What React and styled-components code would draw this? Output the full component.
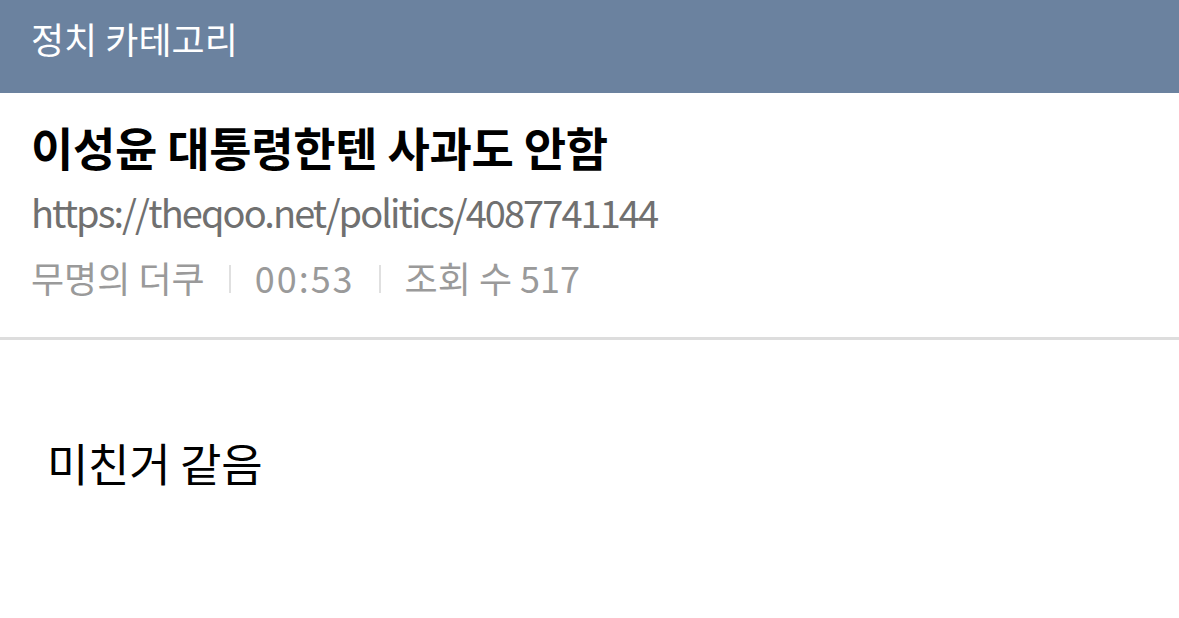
import React from 'react'
import styled, { createGlobalStyle } from 'styled-components'

const Global = createGlobalStyle`
  html, body {
    margin: 0;
    padding: 0;
    background: #fff;
    font-family: "Noto Sans CJK KR", "Noto Sans", sans-serif;
  }
`

const Header = styled.div`
  height: 93px;
  background: #6b829f;
  color: #fff;
  display: flex;
  align-items: center;
  padding: 0 31px 18px;
  box-sizing: border-box;
  font-size: 36px;
  letter-spacing: 0;
`

const Info = styled.div`
  padding: 23px 31px 35px;
  border-bottom: 3px solid #dddddd;
`

const Title = styled.h1`
  margin: 0;
  font-size: 46px;
  font-weight: 700;
  color: #000;
  line-height: 60px;
  letter-spacing: -0.3px;
`

const Url = styled.div`
  margin-top: 11px;
  font-size: 38px;
  color: #707070;
  line-height: 50px;
  letter-spacing: -1.95px;
`

const Meta = styled.div`
  margin-top: 15px;
  display: flex;
  align-items: center;
  font-size: 36px;
  color: #9a9a9a;
  line-height: 50px;
  letter-spacing: 0;
`

const Digits = styled.span`
  letter-spacing: 2px;
`

const Sep = styled.span`
  display: inline-block;
  width: 2px;
  height: 28px;
  background: #e0e0e0;
  margin: 4px 24px 0;
`

const Body = styled.div`
  padding: 93px 47px;
  font-size: 45px;
  line-height: 60px;
  color: #000;
  letter-spacing: -0.3px;
`

export default function App() {
  return (
    <>
      <Global />
      <Header>정치 카테고리</Header>
      <Info>
        <Title>이성윤 대통령한텐 사과도 안함</Title>
        <Url>https://theqoo.net/politics/4087741144</Url>
        <Meta>
          <span>무명의 더쿠</span>
          <Sep />
          <Digits>00:53</Digits>
          <Sep />
          <span>조회 수 517</span>
        </Meta>
      </Info>
      <Body>미친거 같음</Body>
    </>
  )
}
